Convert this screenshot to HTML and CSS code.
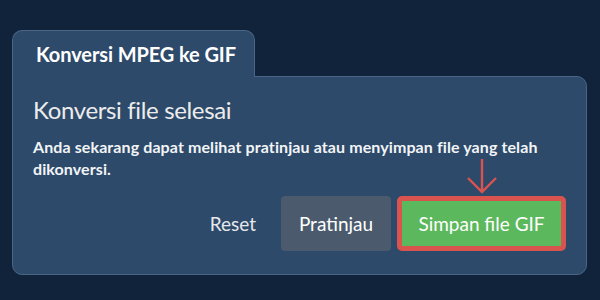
FILE: index.html
```html
<!DOCTYPE html>
<html lang="id">
<head>
<meta charset="utf-8">
<link rel="stylesheet" href="styles.css">
</head>
<body>
<div class="wrap">
  <div class="tab">Konversi MPEG ke GIF</div>
  <div class="panel">
    <h2 class="title">Konversi file selesai</h2>
    <p class="desc">Anda sekarang dapat melihat pratinjau atau menyimpan file yang telah dikonversi.</p>
    <div class="actions">
      <button class="btn btn-link">Reset</button>
      <button class="btn btn-gray">Pratinjau</button>
      <button class="btn btn-green">Simpan file GIF
        <svg class="arrow" width="32" height="38" viewBox="0 0 32 38"><path d="M16 2 V35 M2 21 L16 35 L30 21" fill="none" stroke="#d9534f" stroke-width="2.4"/></svg>
      </button>
    </div>
  </div>
</div>
</body>
</html>
```
FILE: styles.css
```css
html, body {
  margin: 0;
  padding: 0;
  background: #11233a;
  font-family: Lato, "Open Sans", sans-serif;
  color: #eef1f4;
}
.wrap {
  padding: 30px 13px 0 12px;
}
.tab {
  position: relative;
  z-index: 1;
  display: inline-block;
  box-sizing: border-box;
  width: 243px;
  height: 47px;
  margin-bottom: -1px;
  padding: 11px 0 0 23px;
  background: #2d4a6a;
  border: 1px solid #4a6586;
  border-bottom: none;
  border-radius: 10px 10px 0 0;
  font-size: 20px;
  font-weight: 700;
  color: #ffffff;
  letter-spacing: -0.1px;
}
.panel {
  box-sizing: border-box;
  height: 199px;
  background: #2d4a6a;
  border: 1px solid #4a6586;
  border-radius: 0 10px 10px 10px;
  padding: 17px 20px 0 20px;
}
.title {
  margin: 0;
  font-size: 24px;
  font-weight: 400;
  line-height: 32px;
  color: #ececec;
  letter-spacing: -0.35px;
}
.desc {
  margin: 10px 0 0 0;
  font-size: 16px;
  font-weight: 700;
  line-height: 22px;
  color: #f2f4f6;
  padding-right: 20px;
  letter-spacing: 0.1px;
}
.actions {
  display: flex;
  justify-content: flex-end;
  align-items: center;
  gap: 6px;
  margin-top: 16px;
}
.btn {
  position: relative;
  box-sizing: border-box;
  height: 55px;
  border: none;
  border-radius: 4px;
  font-family: Lato, "Open Sans", sans-serif;
  font-size: 19px;
  font-weight: 400;
  color: #ffffff;
  cursor: pointer;
}
.btn-link {
  background: transparent;
  color: #e6e8ea;
  padding: 0 19px 0 18px;
}
.btn-gray {
  background: #4b5b6d;
  width: 110px;
  padding: 0;
}
.btn-green {
  background: #5cb85c;
  border: 5px solid #d9534f;
  width: 169px;
  padding: 0;
  border-radius: 5px;
}
.arrow {
  position: absolute;
  left: 50%;
  margin-left: -16px;
  bottom: 51px;
}
```
